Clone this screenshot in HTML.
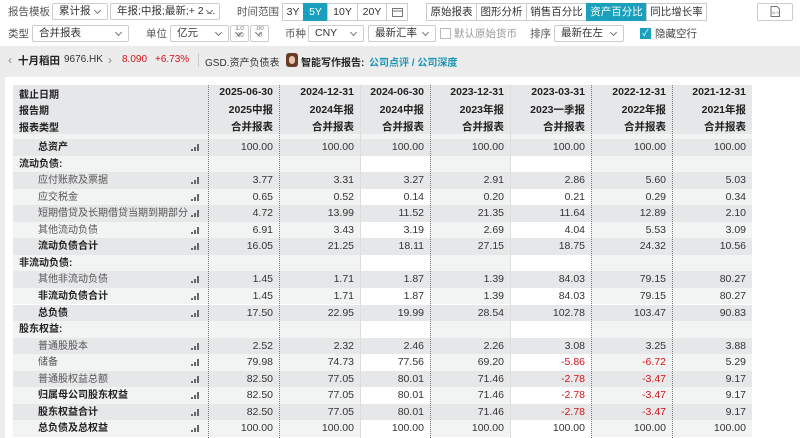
<!DOCTYPE html>
<html><head><meta charset="utf-8"><style>
*{margin:0;padding:0;box-sizing:border-box}
body{width:800px;height:438px;overflow:hidden;background:#fff;font-family:"Liberation Sans","Noto Sans CJK SC",sans-serif;font-size:10px;color:#333;position:relative}
.a{position:absolute;white-space:nowrap}
.lbl{color:#555;font-size:10.5px}
.sel{position:absolute;border:1px solid #ccc;background:#fff;height:17px;line-height:15px;padding-left:6px;font-size:10.5px;color:#333;border-radius:2px;overflow:hidden}
.sel:after{content:"";position:absolute;right:7px;top:4px;width:4px;height:4px;border-right:1px solid #777;border-bottom:1px solid #777;transform:rotate(45deg)}
.btn{position:absolute;top:3px;height:18px;line-height:16px;border:1px solid #ccc;background:#fff;text-align:center;font-size:10.5px;color:#333}
.on{background:#1aa0bd;color:#fff;border-color:#1aa0bd}
.row{position:absolute;left:13px;width:739px;height:16.55px;line-height:16.55px}
.c{position:absolute;top:0;height:100%;text-align:right;padding-right:6px;font-size:10.5px}
.neg{color:#d0131b}
.b{font-weight:bold;color:#222}
.ic{position:absolute;left:178px;top:5px;width:9px;height:7px}
.ic i{position:absolute;bottom:0;width:1.5px;background:#666}
.hd{font-size:10.5px}
.lb{position:absolute;top:2px;line-height:14px;white-space:nowrap}
</style></head><body>
<div class="a lbl" style="left:8px;top:4px">报告模板</div>
<div class="sel" style="left:52px;top:3px;width:56px">累计报</div>
<div class="sel" style="left:110px;top:3px;width:110px">年报;中报;最新;+ 2 ...</div>
<div class="a lbl" style="left:237px;top:4px">时间范围</div>
<div class="btn" style="left:282px;width:22px">3Y</div>
<div class="btn on" style="left:303px;width:25px">5Y</div>
<div class="btn" style="left:327px;width:31px">10Y</div>
<div class="btn" style="left:357px;width:30px">20Y</div>
<div class="btn" style="left:386px;width:22px"><svg width="11" height="10" style="margin-top:3px"><rect x="0.5" y="1.5" width="10" height="8" fill="none" stroke="#777"/><line x1="0" y1="4" x2="11" y2="4" stroke="#777"/></svg></div>
<div class="btn" style="left:426px;width:51px">原始报表</div>
<div class="btn" style="left:476px;width:51px">图形分析</div>
<div class="btn" style="left:526px;width:61px">销售百分比</div>
<div class="btn on" style="left:586px;width:61px">资产百分比</div>
<div class="btn" style="left:646px;width:61px">同比增长率</div>
<div class="btn" style="left:757px;width:36px;border-radius:2px"><svg width="10" height="11" style="margin-top:2px"><path d="M1 .5h6l2.5 2.5v7.5h-8.5z" fill="none" stroke="#777"/><text x="1.5" y="8" font-size="4" fill="#777">XLS</text></svg></div>
<div class="a lbl" style="left:8px;top:26px">类型</div>
<div class="sel" style="left:32px;top:25px;width:97px">合并报表</div>
<div class="a lbl" style="left:146px;top:26px">单位</div>
<div class="sel" style="left:170px;top:25px;width:59px">亿元</div>
<div class="sel" style="left:230px;top:25px;width:19px;padding:0;font-size:6px;line-height:7px;text-align:center;color:#666">1.0<br>.00</div>
<div class="sel" style="left:250px;top:25px;width:19px;padding:0;font-size:6px;line-height:7px;text-align:center;color:#666">.00<br>.0</div>
<div class="a lbl" style="left:285px;top:26px">币种</div>
<div class="sel" style="left:308px;top:25px;width:56px">CNY</div>
<div class="sel" style="left:368px;top:25px;width:68px">最新汇率</div>
<div class="a" style="left:440px;top:28px;width:11px;height:11px;border:1px solid #bbb;background:#fff"></div>
<div class="a" style="left:454px;top:26px;color:#999;font-size:10.5px">默认原始货币</div>
<div class="a lbl" style="left:530px;top:26px">排序</div>
<div class="sel" style="left:554px;top:25px;width:70px">最新在左</div>
<div class="a" style="left:640px;top:28px;width:11px;height:11px;background:#1aa0bd;color:#fff;font-size:9px;line-height:11px;text-align:center">✓</div>
<div class="a" style="left:655px;top:26px;color:#444;font-size:10.5px">隐藏空行</div>
<div class="a" style="left:0;top:46px;width:800px;height:392px;background:#ececec"></div>
<div class="a" style="left:8px;top:53px;color:#888;font-size:12px">‹</div>
<div class="a b" style="left:18px;top:53px;font-size:10.5px">十月稻田</div>
<div class="a" style="left:64px;top:54px;color:#333">9676.HK</div>
<div class="a" style="left:108px;top:53px;color:#888;font-size:12px">›</div>
<div class="a" style="left:122px;top:54px;color:#d0131b">8.090</div>
<div class="a" style="left:155px;top:54px;color:#d0131b">+6.73%</div>
<div class="a" style="left:198px;top:53px;width:1px;height:14px;background:#ccc"></div>
<div class="a" style="left:205px;top:54px;color:#333">GSD.资产负债表</div>
<div class="a" style="left:286px;top:53px;width:12px;height:14px;border-radius:3px;background:#6b3b2a"><div style="margin:3px 3px;width:6px;height:8px;border-radius:3px;background:#e8c3b0"></div></div>
<div class="a b" style="left:301px;top:54px">智能写作报告:</div>
<div class="a" style="left:369px;top:54px;color:#1a94b5;font-weight:bold">公司点评 / 公司深度</div>
<div class="a" style="left:5px;top:77px;width:795px;height:361px;background:#fff"></div>
<div class="a" style="left:13px;top:85px;width:739px;height:49px;background:#e6e7e9"></div>
<div class="a" style="left:13px;top:134px;width:739px;height:5px;background:#f2f3f3"></div>
<div id="t"></div>
<script>
var cols=[[208,279],[279,360],[360,430],[430,510],[510,591],[591,672],[672,752]];
var hd=[["2025-06-30","2025中报"],["2024-12-31","2024年报"],["2024-06-30","2024中报"],["2023-12-31","2023年报"],["2023-03-31","2023一季报"],["2022-12-31","2022年报"],["2021-12-31","2021年报"]];
var h='';
h+='<div class="a b" style="left:19px;top:86px">截止日期</div><div class="a b" style="left:19px;top:102px">报告期</div><div class="a b" style="left:19px;top:119px">报表类型</div>';
hd.forEach(function(d,i){var r=800-cols[i][1]+6;
h+='<div class="a b hd" style="right:'+r+'px;top:86px">'+d[0]+'</div><div class="a b hd" style="right:'+r+'px;top:102px">'+d[1]+'</div><div class="a b hd" style="right:'+r+'px;top:119px">合并报表</div>';});
var rows=[
["总资产",1,1,["100.00","100.00","100.00","100.00","100.00","100.00","100.00"]],
["流动负债:",0,0,null],
["应付账款及票据",0,1,["3.77","3.31","3.27","2.91","2.86","5.60","5.03"]],
["应交税金",0,1,["0.65","0.52","0.14","0.20","0.21","0.29","0.34"]],
["短期借贷及长期借贷当期到期部分",0,1,["4.72","13.99","11.52","21.35","11.64","12.89","2.10"]],
["其他流动负债",0,1,["6.91","3.43","3.19","2.69","4.04","5.53","3.09"]],
["流动负债合计",1,1,["16.05","21.25","18.11","27.15","18.75","24.32","10.56"]],
["非流动负债:",0,0,null],
["其他非流动负债",0,1,["1.45","1.71","1.87","1.39","84.03","79.15","80.27"]],
["非流动负债合计",1,1,["1.45","1.71","1.87","1.39","84.03","79.15","80.27"]],
["总负债",1,1,["17.50","22.95","19.99","28.54","102.78","103.47","90.83"]],
["股东权益:",0,0,null],
["普通股股本",0,1,["2.52","2.32","2.46","2.26","3.08","3.25","3.88"]],
["储备",0,1,["79.98","74.73","77.56","69.20","-5.86","-6.72","5.29"]],
["普通股权益总额",0,1,["82.50","77.05","80.01","71.46","-2.78","-3.47","9.17"]],
["归属母公司股东权益",1,1,["82.50","77.05","80.01","71.46","-2.78","-3.47","9.17"]],
["股东权益合计",1,1,["82.50","77.05","80.01","71.46","-2.78","-3.47","9.17"]],
["总负债及总权益",1,1,["100.00","100.00","100.00","100.00","100.00","100.00","100.00"]]];
rows.forEach(function(r,i){
var top=139+i*16.55, dark=i%2==0;
var bg=dark?'#e6e7e9':'#f2f3f3';
h+='<div class="row" style="top:'+top+'px;background:'+bg+'">';
if(!dark){h+='<div class="a" style="left:347px;top:0;width:70px;height:100%;background:#fff"></div><div class="a" style="left:497px;top:0;width:81px;height:100%;background:#fff"></div>';}
var sec=!r[2];
h+='<div class="lb'+(r[1]||sec?' b':'')+'" style="left:'+(sec?6:25)+'px;'+(r[1]||sec?'':'color:#555')+'">'+r[0]+'</div>';
if(r[2])h+='<div class="ic"><i style="left:0;height:2px"></i><i style="left:3px;height:4px"></i><i style="left:6px;height:7px"></i></div>';
if(r[3])r[3].forEach(function(v,j){h+='<div class="c'+(v[0]=='-'?' neg':'')+'" style="left:'+(cols[j][0]-13)+'px;width:'+(cols[j][1]-cols[j][0])+'px">'+v+'</div>';});
h+='</div>';});
[208,279,430,591,672].forEach(function(x){h+='<div class="a" style="left:'+x+'px;top:85px;height:353px;border-left:1px dotted #777"></div>';});
[360,510].forEach(function(x){h+='<div class="a" style="left:'+x+'px;top:85px;height:353px;border-left:1px solid #ddd"></div>';});
document.getElementById('t').innerHTML=h;
</script>
</body></html>
